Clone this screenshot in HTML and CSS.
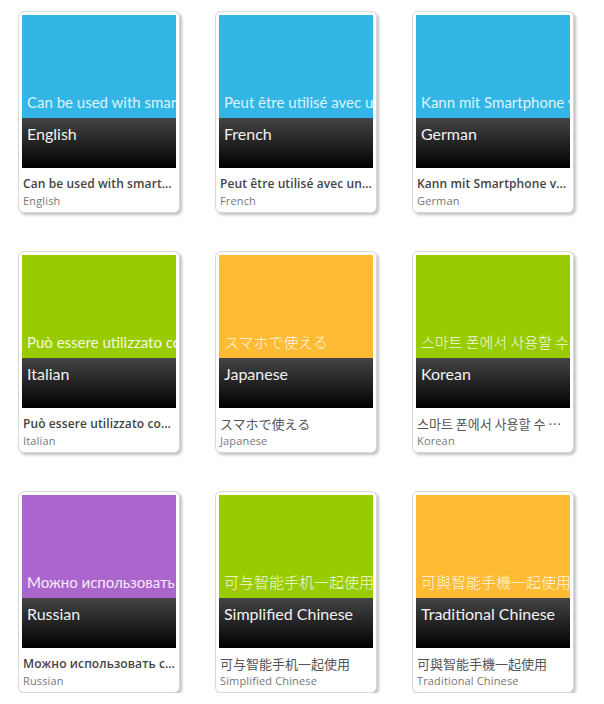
FILE: index.html
```html
<!DOCTYPE html>
<html>
<head>
<meta charset="utf-8">
<link rel="stylesheet" href="styles.css">
</head>
<body>
<div class="grid">
  <div class="card">
    <div class="thumb">
      <div class="top blue"><span class="phrase">Can be used with smartphone</span></div>
      <div class="band">English</div>
    </div>
    <div class="title bold">Can be used with smartphone</div>
    <div class="sub">English</div>
  </div>
  <div class="card">
    <div class="thumb">
      <div class="top blue"><span class="phrase">Peut être utilisé avec un smartphone</span></div>
      <div class="band">French</div>
    </div>
    <div class="title bold">Peut être utilisé avec un smartphone</div>
    <div class="sub">French</div>
  </div>
  <div class="card">
    <div class="thumb">
      <div class="top blue"><span class="phrase">Kann mit Smartphone verwendet werden</span></div>
      <div class="band">German</div>
    </div>
    <div class="title bold">Kann mit Smartphone verwendet werden</div>
    <div class="sub">German</div>
  </div>
  <div class="card">
    <div class="thumb">
      <div class="top green"><span class="phrase">Può essere utilizzato con lo smartphone</span></div>
      <div class="band">Italian</div>
    </div>
    <div class="title bold">Può essere utilizzato con lo smartphone</div>
    <div class="sub">Italian</div>
  </div>
  <div class="card">
    <div class="thumb">
      <div class="top orange"><span class="phrase cjk">スマホで使える</span></div>
      <div class="band">Japanese</div>
    </div>
    <div class="title cjk">スマホで使える</div>
    <div class="sub">Japanese</div>
  </div>
  <div class="card">
    <div class="thumb">
      <div class="top green"><span class="phrase cjk">스마트 폰에서 사용할 수 있습니다</span></div>
      <div class="band">Korean</div>
    </div>
    <div class="title cjk">스마트 폰에서 사용할 수 있습니다</div>
    <div class="sub">Korean</div>
  </div>
  <div class="card">
    <div class="thumb">
      <div class="top purple"><span class="phrase">Можно использовать со смартфоном</span></div>
      <div class="band">Russian</div>
    </div>
    <div class="title bold">Можно использовать со смартфоном</div>
    <div class="sub">Russian</div>
  </div>
  <div class="card">
    <div class="thumb">
      <div class="top green"><span class="phrase cjk">可与智能手机一起使用</span></div>
      <div class="band">Simplified Chinese</div>
    </div>
    <div class="title cjk">可与智能手机一起使用</div>
    <div class="sub">Simplified Chinese</div>
  </div>
  <div class="card">
    <div class="thumb">
      <div class="top orange"><span class="phrase cjk">可與智能手機一起使用</span></div>
      <div class="band">Traditional Chinese</div>
    </div>
    <div class="title cjk">可與智能手機一起使用</div>
    <div class="sub">Traditional Chinese</div>
  </div>
</div>
</body>
</html>
```

FILE: styles.css
```css
html, body {
  margin: 0;
  padding: 0;
  background: #fff;
}
body {
  font-family: "Open Sans", "Noto Sans", "Noto Sans CJK JP", sans-serif;
}
.grid {
  display: grid;
  grid-template-columns: repeat(3, 162px);
  column-gap: 35px;
  row-gap: 38px;
  padding: 11px 0 0 18px;
}
.card {
  box-sizing: border-box;
  width: 162px;
  height: 202px;
  border: 1px solid #d9d9d9;
  border-radius: 6px;
  padding: 3px;
  background: #fff;
  box-shadow: 2px 2px 3px rgba(0, 0, 0, 0.25);
}
.thumb {
  width: 154px;
  height: 153px;
  overflow: hidden;
  font-family: "Lato", "Noto Sans CJK JP", sans-serif;
}
.top {
  height: 103px;
  display: flex;
  align-items: flex-end;
  overflow: hidden;
  white-space: nowrap;
}
.phrase {
  font-size: 15px;
  line-height: 20px;
  padding: 0 0 6px 5px;
}
.phrase.cjk {
  font-family: "Noto Sans CJK JP", sans-serif;
  font-weight: 300;
}
.blue { background: #33b5e5; }
.blue .phrase { color: #dcf4fd; }
.green { background: #99cc00; }
.green .phrase { color: #f3f9dc; }
.orange { background: #ffbb33; }
.orange .phrase { color: #fff6e2; }
.purple { background: #aa66cc; }
.purple .phrase { color: #f5ebf9; }
.band {
  height: 50px;
  box-sizing: border-box;
  padding: 6px 0 0 5px;
  font-size: 16px;
  line-height: 20px;
  color: #f2f2f2;
  background: linear-gradient(#454545, #000);
  white-space: nowrap;
}
.title {
  margin-top: 6px;
  font-size: 12px;
  line-height: 19px;
  color: #444;
  white-space: nowrap;
  overflow: hidden;
  text-overflow: ellipsis;
  padding-left: 1px;
  letter-spacing: 0.1px;
}
.title.bold {
  font-weight: 600;
}
.title.cjk {
  font-family: "Noto Sans CJK JP", sans-serif;
  font-size: 13px;
  font-weight: 400;
  color: #555;
  letter-spacing: 0;
}
.sub {
  font-size: 11px;
  line-height: 15px;
  color: #777;
  padding-left: 1px;
  white-space: nowrap;
  letter-spacing: 0.15px;
}
```
